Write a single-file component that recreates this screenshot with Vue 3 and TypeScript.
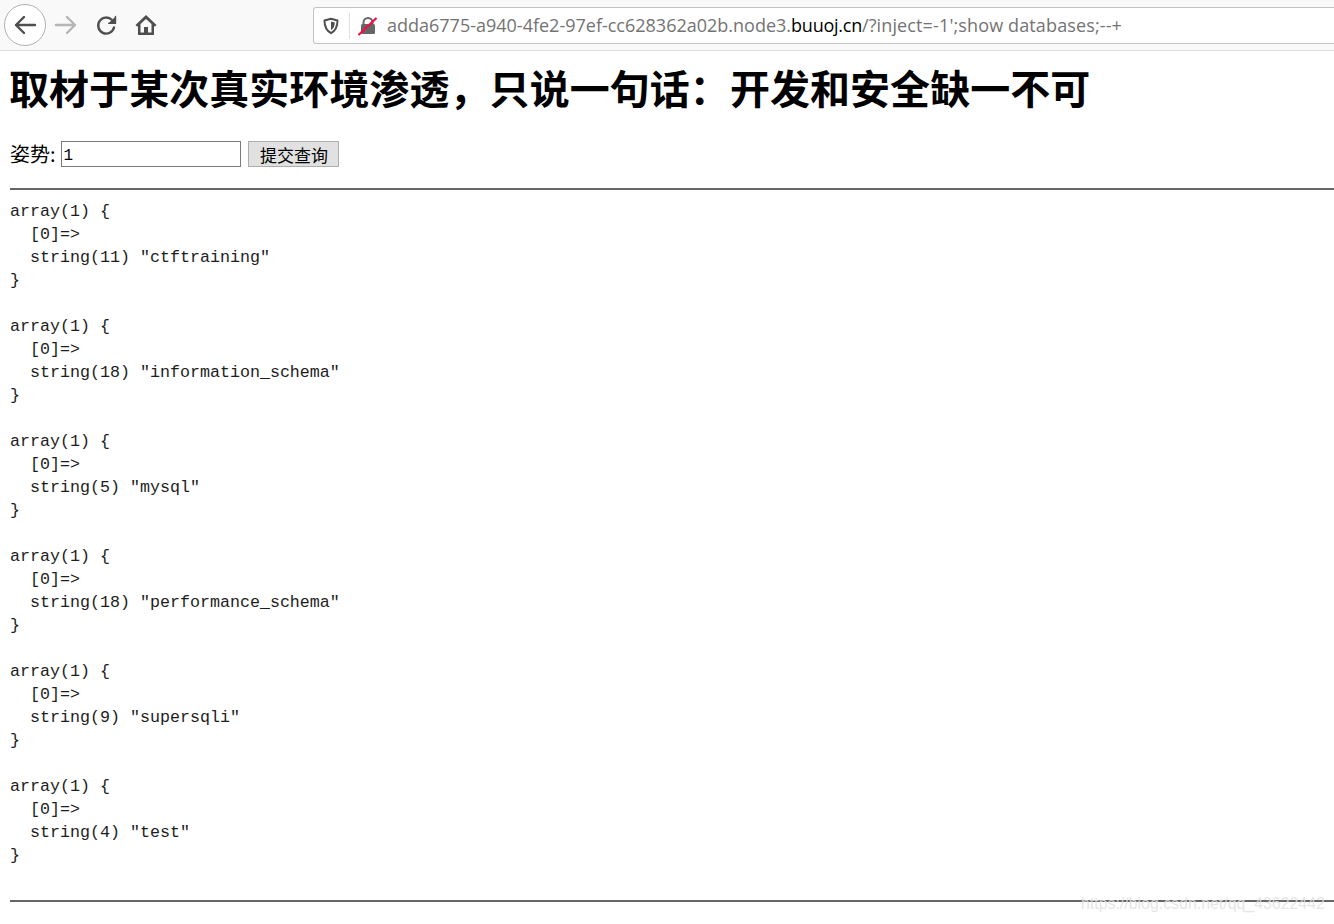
<script setup lang="ts">
const names: [number, string][] = [
  [11, 'ctftraining'],
  [18, 'information_schema'],
  [5, 'mysql'],
  [18, 'performance_schema'],
  [9, 'supersqli'],
  [4, 'test'],
]
const dump = names
  .map(([n, s]) => `array(1) {\n  [0]=>\n  string(${n}) "${s}"\n}\n`)
  .join('\n')
</script>

<template>
  <div class="page">
    <header class="toolbar">
      <div class="nav">
        <button class="back" aria-label="Back">
          <svg width="24" height="24" viewBox="0 0 24 24" fill="none" stroke="#4f4f4f" stroke-width="2.400" stroke-linecap="round" stroke-linejoin="round"><path d="M22 12H3M11 4l-8 8 8 8" /></svg>
        </button>
        <svg class="fwd" width="24" height="24" viewBox="0 0 24 24" fill="none" stroke="#b5b5b5" stroke-width="2.400" stroke-linecap="round" stroke-linejoin="round"><path d="M2 12h19M13 4l8 8-8 8" /></svg>
        <svg class="reload" width="24" height="24" viewBox="0 0 24 24" fill="none" stroke="#4f4f4f" stroke-width="2.400" stroke-linecap="round" stroke-linejoin="round"><path d="M19 14.500A8 8 0 1 1 17 7l2.500 2.500" /><path d="M20.500 3.500v6.800h-6.800" fill="#4f4f4f" stroke-width="1.400" /></svg>
        <svg class="home" width="22" height="22" viewBox="0 0 22 22"><path d="M11 1 .5 11l1.800 1.800L3 12.100V21h16v-8.900l.7.700 1.800-1.800ZM11 5l5.500 5v8.500h-3.500v-5.500h-4v5.500H5.500V10Z" fill="#4f4f4f" fill-rule="evenodd" /></svg>
      </div>
      <div class="urlbar">
        <svg class="shield" width="18" height="18" viewBox="0 0 18 18" fill="none"><path d="M9 1.800 15.500 3.500c0 6-1.500 10-6.500 12.700C4 13.500 2.500 9.500 2.500 3.500Z" stroke="#4f4f4f" stroke-width="2" stroke-linejoin="round" /><path d="M9 4.500 12.800 5.400C12.700 8.800 11.800 11.200 9 13Z" fill="#4f4f4f" /></svg>
        <span class="sep"></span>
        <svg class="lock" width="20" height="20" viewBox="0 0 20 20"><rect x="3" y="8" width="14" height="10" rx="1.500" fill="#666" /><path d="M5.500 9V6.500a4.500 4.500 0 0 1 9 0V9" fill="none" stroke="#666" stroke-width="2" /><path d="M.5 19 18.500 2" stroke="#f70d45" stroke-width="2.200" /></svg>
        <span class="url">adda6775-a940-4fe2-97ef-cc628362a02b.node3.<span class="domain">buuoj.cn</span><span class="rest">/?inject=-1';show databases;--+</span></span>
      </div>
    </header>

    <main class="content">
      <h1>取材于某次真实环境渗透，只说一句话：开发和安全缺一不可</h1>
      <form class="query" @submit.prevent>
        <label for="inject">姿势:</label>
        <input id="inject" type="text" value="1" />
        <input class="submit" type="submit" value="提交查询" />
      </form>
      <hr class="rule-top" />
      <pre>{{ dump }}</pre>
      <hr class="rule-bottom" />
    </main>

    <div class="watermark">https://blog.csdn.net/qq_43622442</div>
  </div>
</template>

<style>
html, body { margin: 0; background: #fff; overflow: hidden; }
</style>

<style scoped>
.page {
  position: relative;
  width: 1334px;
  height: 924px;
  overflow: hidden;
  font-family: "Liberation Serif", "Noto Sans CJK SC", serif;
  color: #000;
}
.toolbar {
  display: flex;
  align-items: center;
  box-sizing: border-box;
  background: #f9f9fa;
  border-bottom: 1px solid #dedede;
  height: 51px;
  padding-left: 4px;
}
.nav {
  display: flex;
  align-items: center;
  width: 309px;
  flex: none;
}
.back {
  display: flex;
  align-items: center;
  justify-content: center;
  width: 42px;
  height: 42px;
  padding: 0;
  border: 1px solid #b1b1b1;
  border-radius: 50%;
  background: #fff;
}
.fwd { margin-left: 8px; }
.reload { margin-left: 17px; }
.home { margin-left: 16px; }
.urlbar {
  display: flex;
  align-items: center;
  flex: 1;
  height: 37px;
  box-sizing: border-box;
  margin-top: 1px;
  background: #fff;
  border: 1px solid #c4c4c4;
  border-right: 0;
  border-radius: 3px 0 0 3px;
  padding-left: 8px;
}
.sep {
  width: 1px;
  height: 26px;
  background: #e0e0e0;
  margin: 0 8px 0 9px;
}
.url {
  margin-left: 9px;
  margin-top: -2px;
  font: 18px "Open Sans", "Liberation Sans", sans-serif;
  color: #737373;
  white-space: pre;
}
.domain { color: #000; letter-spacing: -0.25px; }
.rest { letter-spacing: 0.13px; }
.content { padding-left: 10px; }
h1 {
  margin: 13px 0 0 -1px;
  font: bold 40px/46px "Noto Sans CJK SC", sans-serif;
  letter-spacing: 0.05px;
}
.query {
  display: flex;
  align-items: center;
  margin-top: 31px;
  height: 26px;
  font-size: 20px;
}
.query label { font-family: "Noto Sans CJK SC", sans-serif; font-size: 20px; margin-top: -2px; }
#inject {
  box-sizing: border-box;
  width: 180px;
  height: 26px;
  margin: 0 0 0 5px;
  padding: 4px 2px 0;
  border: 1px solid #7a7a7a;
  font: 16px "Liberation Mono", monospace;
  background: #fff;
  color: #000;
  outline: none;
}
.submit {
  box-sizing: border-box;
  width: 91px;
  height: 26px;
  margin: 0 0 0 7px;
  padding: 0 0 0 2px;
  background: #e1e1e1;
  border: 1px solid #adadad;
  font: 17px "Noto Sans CJK SC", sans-serif;
  color: #000;
}
hr {
  border: 0;
  height: 2px;
  background: #666;
  margin: 0;
}
.rule-top { margin-top: 21px; }
pre {
  margin: 10px 0 0;
  font: 16.67px/23px "Liberation Mono", monospace;
  color: #1d1d1d;
  height: 700px;
}
.rule-bottom { margin-top: 0; }
.watermark {
  position: absolute;
  left: 1081px;
  top: 895px;
  font: 15.900px "Liberation Sans", sans-serif;
  color: rgba(225, 225, 225, 0.85);
  white-space: nowrap;
}
</style>
